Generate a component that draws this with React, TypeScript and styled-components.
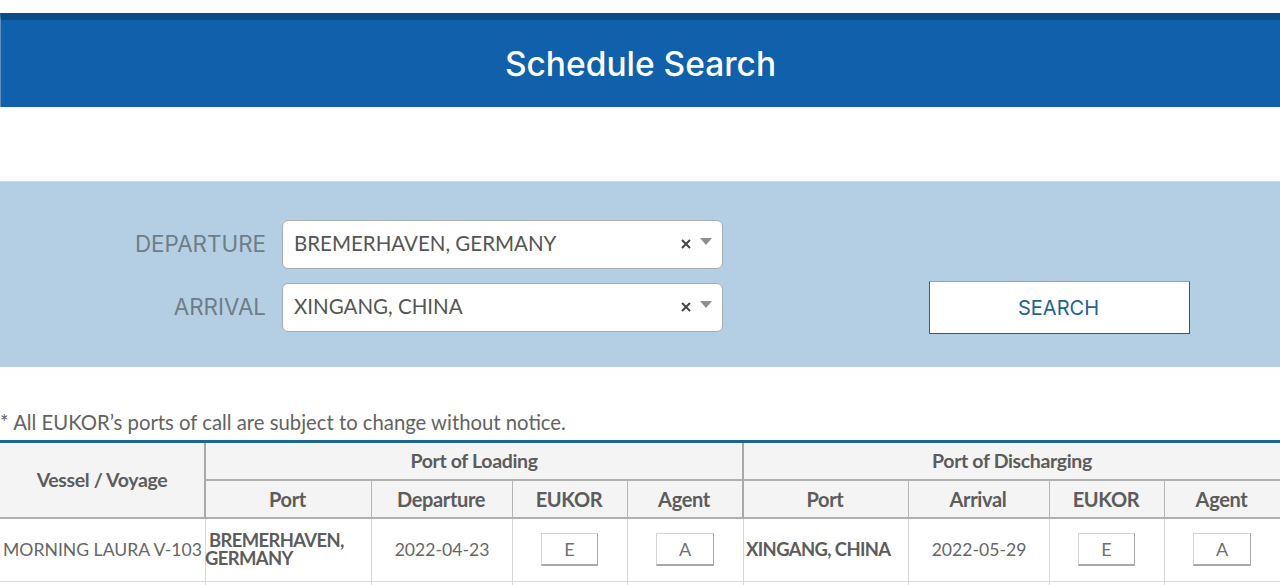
import React from "react";
import styled, { createGlobalStyle } from "styled-components";

const Global = createGlobalStyle`
  html, body { margin: 0; padding: 0; background: #fff; overflow: hidden; height: 585px; }
  body { font-family: Lato, "Liberation Sans", sans-serif; color: #5f5f5f; }
`;

const Page = styled.div`
  width: 1280px;
  height: 585px;
  overflow: hidden;
  padding-top: 13px;
  box-sizing: border-box;
`;

const Banner = styled.header`
  height: 94px;
  box-sizing: border-box;
  border-top: 7px solid #0d4b87;
  border-left: 1px solid #5f8fc0;
  background: #1060ab;
  display: flex;
  align-items: center;
  justify-content: center;
`;

const Title = styled.h1`
  margin: 0;
  color: #fff;
  font-family: Inter, "Open Sans", sans-serif;
  font-size: 33.5px;
  font-weight: 500;
`;

const SearchPanel = styled.section`
  margin-top: 74px;
  height: 186px;
  box-sizing: border-box;
  background: #b4cfe3;
  border-top: 1px solid #c9dcea;
  padding: 39px 90px 0 0;
  display: flex;
  justify-content: space-between;
`;

const Fields = styled.div`
  display: grid;
  grid-template-columns: 266px 442px;
  column-gap: 15px;
  row-gap: 14px;
  align-items: center;
  align-content: start;
  margin-top: -1px;
`;

const FieldLabel = styled.label`
  text-align: right;
  font-family: Inter, "Open Sans", sans-serif;
  font-size: 22.4px;
  font-weight: 400;
  color: #707c86;
  padding-bottom: 3px;
`;

const Select = styled.div`
  height: 49px;
  box-sizing: border-box;
  background: #fff;
  border: 1px solid #a9acae;
  border-radius: 6px;
  margin-left: 1px;
  padding: 0 10px 3px 11px;
  display: flex;
  align-items: center;
  font-size: 20.5px;
  color: #555;
`;

const SelectValue = styled.span`
  flex: 1;
`;

const Clear = styled.svg`
  width: 12px;
  height: 12px;
  margin-right: 8px;
  margin-top: 1px;
`;

const Caret = styled.span`
  width: 0;
  height: 0;
  border-left: 6px solid transparent;
  border-right: 6px solid transparent;
  border-top: 7px solid #8f8f8f;
  margin-top: -3px;
`;

const SearchButton = styled.button`
  align-self: flex-start;
  margin-top: 60px;
  width: 261px;
  height: 53px;
  box-sizing: border-box;
  background: #fff;
  border-style: solid;
  border-width: 1px;
  border-color: #7fa6c6 #1f5f8f #1f5f8f #1f6a9c;
  color: #1c6492;
  font-family: Inter, "Open Sans", sans-serif;
  font-size: 20px;
  font-weight: 400;
  padding: 0 2px 0 0;
`;

const Notice = styled.p`
  margin: 0;
  height: 73px;
  box-sizing: border-box;
  padding-top: 41px;
  font-size: 20.3px;
  line-height: 28px;
  color: #626262;
`;

const Schedule = styled.table`
  width: 1280px;
  table-layout: fixed;
  border-collapse: separate;
  border-spacing: 0;
  border-top: 3px solid #1b6690;
`;

const Head = styled.th<{ $last?: boolean }>`
  background: #f4f4f4;
  padding: 0 0 1px;
  height: 35px;
  font-size: 19.5px;
  font-weight: 700;
  color: #5c5c5c;
  letter-spacing: -0.35px;
  text-align: center;
  border-bottom: 2px solid #b0b0b0;
  border-right: ${(p) => (p.$last ? "none" : "1px solid #b5b5b5")};
`;

const SubHead = styled(Head)`
  font-size: 20px;
  padding-right: 2px;
`;

const GroupHead = styled(Head)`
  border-right: ${(p) => (p.$last ? "none" : "2px solid #a9a9a9")};
`;

const SubHeadEnd = styled(SubHead)`
  border-right: 2px solid #a9a9a9;
`;

const Cell = styled.td<{ $last?: boolean }>`
  box-sizing: border-box;
  height: 63px;
  padding: 0 0 2px;
  font-size: 17.6px;
  color: #666;
  text-align: center;
  border-bottom: 1px solid #dcdcdc;
  border-right: ${(p) => (p.$last ? "none" : "1px solid #d8d8d8")};
`;

const VesselCell = styled(Cell)`
  white-space: nowrap;
`;

const PortCell = styled(Cell)`
  text-align: left;
  font-size: 18.4px;
  line-height: 18px;
  font-weight: 700;
  letter-spacing: -0.6px;
  color: #5c5c5c;
`;

const PortLines = styled.span`
  display: block;
  margin-left: -1px;
`;

const PortFirst = styled.span<{ $indent: number }>`
  padding-left: ${(p) => p.$indent}px;
`;

const LinkButton = styled.button<{ $wide?: boolean }>`
  width: ${(p) => (p.$wide ? 58 : 57)}px;
  height: 33px;
  box-sizing: border-box;
  background: #fff;
  border: 1px solid #d4d4d4;
  border-right-color: #a8a8a8;
  border-bottom: 2px solid #a8a8a8;
  font-family: Lato, sans-serif;
  font-size: 18px;
  color: #707070;
  padding: 0;
  margin-left: -1px;
  display: inline-block;
  vertical-align: middle;
`;

const widths = [206, 166, 141, 115, 116, 165, 141, 115, 115];

function ClearIcon() {
  return (
    <Clear viewBox="0 0 12 12">
      <path d="M2 2l8 8M10 2l-8 8" stroke="#444" strokeWidth="2" fill="none" />
    </Clear>
  );
}

function Port({ name, indent }: { name: string; indent: number }) {
  const [a, b] = name.split("\n");
  return (
    <PortCell>
      <PortLines>
        <PortFirst $indent={indent}>{a}</PortFirst>
        {b && (
          <>
            <br />
            {b}
          </>
        )}
      </PortLines>
    </PortCell>
  );
}

export default function App() {
  return (
    <Page>
      <Global />
      <Banner>
        <Title>Schedule Search</Title>
      </Banner>
      <SearchPanel>
        <Fields>
          <FieldLabel>DEPARTURE</FieldLabel>
          <Select>
            <SelectValue>BREMERHAVEN, GERMANY</SelectValue>
            <ClearIcon />
            <Caret />
          </Select>
          <FieldLabel>ARRIVAL</FieldLabel>
          <Select>
            <SelectValue>XINGANG, CHINA</SelectValue>
            <ClearIcon />
            <Caret />
          </Select>
        </Fields>
        <SearchButton>SEARCH</SearchButton>
      </SearchPanel>
      <Notice>* All EUKOR’s ports of call are subject to change without notice.</Notice>
      <Schedule>
        <colgroup>
          {widths.map((w, i) => (
            <col key={i} width={w} />
          ))}
        </colgroup>
        <thead>
          <tr>
            <GroupHead rowSpan={2}>Vessel / Voyage</GroupHead>
            <GroupHead colSpan={4}>Port of Loading</GroupHead>
            <GroupHead colSpan={4} $last>Port of Discharging</GroupHead>
          </tr>
          <tr>
            <SubHead>Port</SubHead>
            <SubHead>Departure</SubHead>
            <SubHead>EUKOR</SubHead>
            <SubHeadEnd>Agent</SubHeadEnd>
            <SubHead>Port</SubHead>
            <SubHead>Arrival</SubHead>
            <SubHead>EUKOR</SubHead>
            <SubHead $last>Agent</SubHead>
          </tr>
        </thead>
        <tbody>
          <tr>
            <VesselCell>MORNING LAURA V-103</VesselCell>
            <Port name={"BREMERHAVEN,\nGERMANY"} indent={4} />
            <Cell>2022-04-23</Cell>
            <Cell><LinkButton>E</LinkButton></Cell>
            <Cell><LinkButton $wide>A</LinkButton></Cell>
            <Port name={"XINGANG, CHINA"} indent={3} />
            <Cell>2022-05-29</Cell>
            <Cell><LinkButton>E</LinkButton></Cell>
            <Cell $last><LinkButton $wide>A</LinkButton></Cell>
          </tr>
          <tr>
            {widths.map((_, i) => (
              <Cell key={i} $last={i === 8} />
            ))}
          </tr>
        </tbody>
      </Schedule>
    </Page>
  );
}
